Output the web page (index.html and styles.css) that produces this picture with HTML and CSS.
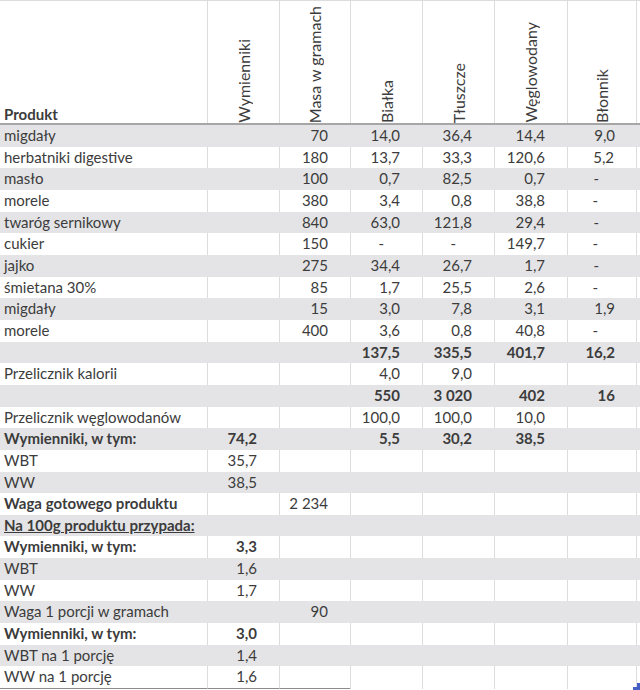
FILE: index.html
```html
<!DOCTYPE html>
<html lang="pl">
<head>
<meta charset="utf-8">
<title>Wymienniki</title>
<link rel="stylesheet" href="styles.css">
</head>
<body>
<div class="sheet">
  <div class="head">
    <div class="c prod">Produkt</div>
    <div class="c"><span class="vt">Wymienniki</span></div>
    <div class="c"><span class="vt">Masa w gramach</span></div>
    <div class="c"><span class="vt">Białka</span></div>
    <div class="c"><span class="vt">Tłuszcze</span></div>
    <div class="c"><span class="vt">Węglowodany</span></div>
    <div class="c"><span class="vt">Błonnik</span></div>
  </div>

  <div class="row g"><div class="c">migdały</div><div class="c"></div><div class="c">70</div><div class="c">14,0</div><div class="c">36,4</div><div class="c">14,4</div><div class="c">9,0</div></div>
  <div class="row"><div class="c">herbatniki digestive</div><div class="c"></div><div class="c">180</div><div class="c">13,7</div><div class="c">33,3</div><div class="c">120,6</div><div class="c">5,2</div></div>
  <div class="row g"><div class="c">masło</div><div class="c"></div><div class="c">100</div><div class="c">0,7</div><div class="c">82,5</div><div class="c">0,7</div><div class="c d">-</div></div>
  <div class="row"><div class="c">morele</div><div class="c"></div><div class="c">380</div><div class="c">3,4</div><div class="c">0,8</div><div class="c">38,8</div><div class="c d">-</div></div>
  <div class="row g"><div class="c">twaróg sernikowy</div><div class="c"></div><div class="c">840</div><div class="c">63,0</div><div class="c">121,8</div><div class="c">29,4</div><div class="c d">-</div></div>
  <div class="row"><div class="c">cukier</div><div class="c"></div><div class="c">150</div><div class="c d">-</div><div class="c d">-</div><div class="c">149,7</div><div class="c d">-</div></div>
  <div class="row g"><div class="c">jajko</div><div class="c"></div><div class="c">275</div><div class="c">34,4</div><div class="c">26,7</div><div class="c">1,7</div><div class="c d">-</div></div>
  <div class="row"><div class="c">śmietana 30%</div><div class="c"></div><div class="c">85</div><div class="c">1,7</div><div class="c">25,5</div><div class="c">2,6</div><div class="c d">-</div></div>
  <div class="row g"><div class="c">migdały</div><div class="c"></div><div class="c">15</div><div class="c">3,0</div><div class="c">7,8</div><div class="c">3,1</div><div class="c">1,9</div></div>
  <div class="row"><div class="c">morele</div><div class="c"></div><div class="c">400</div><div class="c">3,6</div><div class="c">0,8</div><div class="c">40,8</div><div class="c d">-</div></div>
  <div class="row g b"><div class="c"></div><div class="c"></div><div class="c"></div><div class="c">137,5</div><div class="c">335,5</div><div class="c">401,7</div><div class="c">16,2</div></div>
  <div class="row"><div class="c">Przelicznik kalorii</div><div class="c"></div><div class="c"></div><div class="c">4,0</div><div class="c">9,0</div><div class="c"></div><div class="c"></div></div>
  <div class="row g b"><div class="c"></div><div class="c"></div><div class="c"></div><div class="c">550</div><div class="c">3 020</div><div class="c">402</div><div class="c">16</div></div>
  <div class="row"><div class="c">Przelicznik węglowodanów</div><div class="c"></div><div class="c"></div><div class="c">100,0</div><div class="c">100,0</div><div class="c">10,0</div><div class="c"></div></div>
  <div class="row g b"><div class="c">Wymienniki, w tym:</div><div class="c">74,2</div><div class="c"></div><div class="c">5,5</div><div class="c">30,2</div><div class="c">38,5</div><div class="c"></div></div>
  <div class="row"><div class="c">WBT</div><div class="c">35,7</div><div class="c"></div><div class="c"></div><div class="c"></div><div class="c"></div><div class="c"></div></div>
  <div class="row g"><div class="c">WW</div><div class="c">38,5</div><div class="c"></div><div class="c"></div><div class="c"></div><div class="c"></div><div class="c"></div></div>
  <div class="row"><div class="c b">Waga gotowego produktu</div><div class="c"></div><div class="c">2 234</div><div class="c"></div><div class="c"></div><div class="c"></div><div class="c"></div></div>
  <div class="row g"><div class="c b u">Na 100g produktu przypada:</div><div class="c"></div><div class="c"></div><div class="c"></div><div class="c"></div><div class="c"></div><div class="c"></div></div>
  <div class="row b"><div class="c">Wymienniki, w tym:</div><div class="c">3,3</div><div class="c"></div><div class="c"></div><div class="c"></div><div class="c"></div><div class="c"></div></div>
  <div class="row g"><div class="c">WBT</div><div class="c">1,6</div><div class="c"></div><div class="c"></div><div class="c"></div><div class="c"></div><div class="c"></div></div>
  <div class="row"><div class="c">WW</div><div class="c">1,7</div><div class="c"></div><div class="c"></div><div class="c"></div><div class="c"></div><div class="c"></div></div>
  <div class="row g"><div class="c">Waga 1 porcji w gramach</div><div class="c"></div><div class="c">90</div><div class="c"></div><div class="c"></div><div class="c"></div><div class="c"></div></div>
  <div class="row b"><div class="c">Wymienniki, w tym:</div><div class="c">3,0</div><div class="c"></div><div class="c"></div><div class="c"></div><div class="c"></div><div class="c"></div></div>
  <div class="row g"><div class="c">WBT na 1 porcję</div><div class="c">1,4</div><div class="c"></div><div class="c"></div><div class="c"></div><div class="c"></div><div class="c"></div></div>
  <div class="row last"><div class="c">WW na 1 porcję</div><div class="c">1,6</div><div class="c"></div><div class="c"></div><div class="c"></div><div class="c"></div><div class="c"></div></div>

  <svg class="handle" width="7" height="7" viewBox="0 0 7 7"><polygon points="4,0 7,0 7,7 0,7 0,4 4,4" fill="#4460c4"/></svg>
</div>
</body>
</html>
```

FILE: styles.css
```css
* {
  box-sizing: border-box;
}

html, body {
  margin: 0;
  padding: 0;
  background: #ffffff;
}

body {
  font-family: Lato, "Liberation Sans", sans-serif;
  font-size: 15px;
  color: #3c3c3c;
}

.sheet {
  position: relative;
  width: 640px;
  height: 690px;
  overflow: hidden;
}

.head,
.row {
  display: grid;
  grid-template-columns: 207px 72px 71px 72px 72px 73px 70px;
}

.head {
  height: 125px;
  border-top: 1px solid #dcdcdc;
  border-bottom: 2px solid #a6a6a6;
}

.head .c {
  display: flex;
  flex-direction: column;
  justify-content: flex-end;
  align-items: center;
  padding-bottom: 0;
  border-left: 1px solid #dcdcdc;
}

.head .c:last-child {
  border-right: 1px solid #dcdcdc;
}

.head .prod {
  border-left: none;
  align-items: flex-start;
  padding-left: 4px;
  padding-bottom: 1px;
  font-weight: 700;
  line-height: 16px;
}

.vt {
  writing-mode: vertical-rl;
  transform: rotate(180deg);
  white-space: nowrap;
  font-size: 16px;
  line-height: 16px;
}

.row {
  height: 21.667px;
  line-height: 21.667px;
}

.row.g {
  background: #e4e4e6;
}

.row .c {
  text-align: right;
  padding-right: 22px;
  white-space: nowrap;
  overflow: visible;
}

.row .c:first-child {
  text-align: left;
  padding-left: 4px;
  padding-right: 0;
}

.row:not(.g) .c + .c {
  border-left: 1px solid #dcdcdc;
}

.row:not(.g) .c:last-child {
  border-right: 1px solid #dcdcdc;
}

.row .c.d {
  padding-right: 38px;
}

.b {
  font-weight: 700;
}

.u {
  text-decoration: underline;
}

.row.last .c:nth-child(-n+3) {
  border-bottom: 1px solid #8c8c8c;
}

.handle {
  position: absolute;
  left: 633px;
  top: 683px;
}
```
